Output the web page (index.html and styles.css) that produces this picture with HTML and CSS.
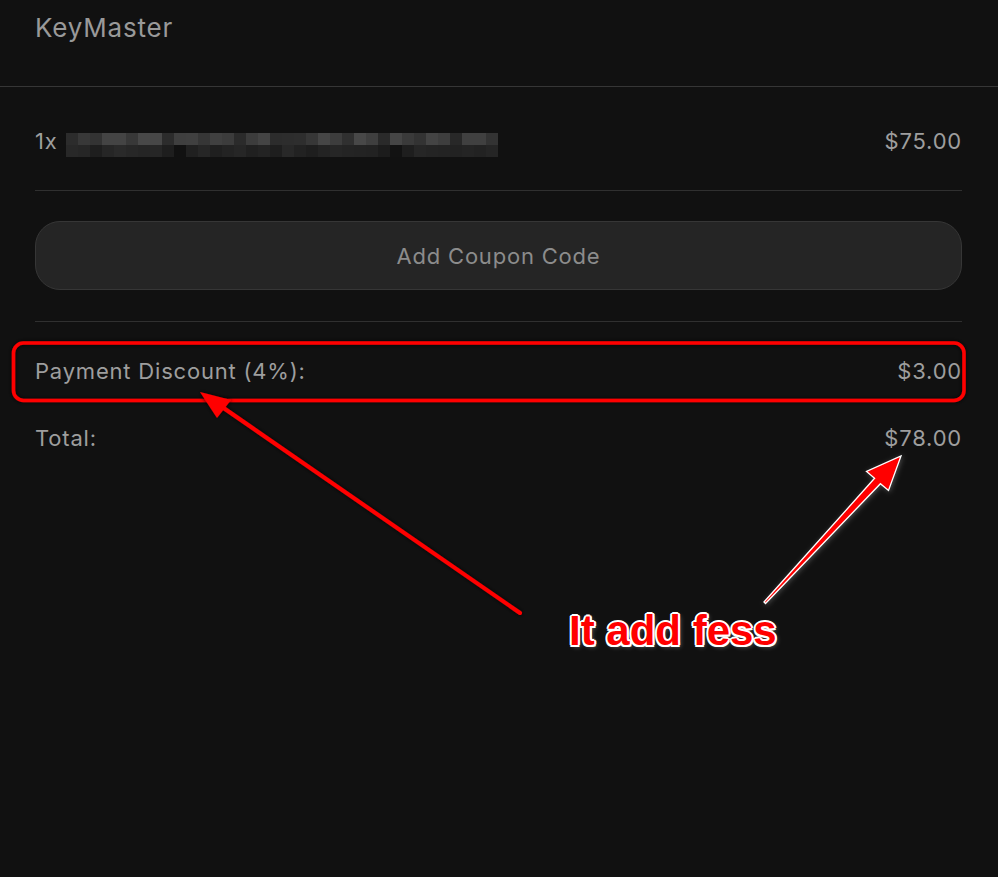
FILE: index.html
```html
<!DOCTYPE html>
<html lang="en">
<head>
  <meta charset="UTF-8" />
  <meta name="viewport" content="width=device-width, initial-scale=1.0" />
  <title>KeyMaster - Checkout</title>
  <link rel="stylesheet" href="styles.css">
  <script>
    // pixelated product name (censored in the screenshot)
    const topRow = [0x2c,0x38,0x33,0x44,0x44,0x38,0x48,0x47,0x2c,0x3f,0x40,0x36,0x40,0x3c,0x2b,0x3c,0x44,0x2c,
                    0x2d,0x2e,0x37,0x46,0x3d,0x30,0x48,0x3f,0x2a,0x45,0x3a,0x33,0x44,0x3e,0x28,0x40,0x40,0x33];
    const bottomRow = [0x28,0x26,0x1e,0x26,0x2a,0x27,0x25,0x26,0x1e,0x11,0x20,0x26,0x1f,0x23,0x26,0x20,0x23,0x1e,
                       0x28,0x22,0x1e,0x23,0x26,0x24,0x23,0x22,0x1c,0x12,0x1e,0x26,0x24,0x23,0x22,0x24,0x22,0x25];

    window.onload = function() {
      const blur = document.querySelector('.blur');
      [topRow, bottomRow].forEach(row => {
        row.forEach(v => {
          const cell = document.createElement('span');
          cell.style.background = `rgb(${v},${v},${v})`;
          blur.appendChild(cell);
        });
      });
    }
  </script>
</head>
<body>
  <header>
    <h1>KeyMaster</h1>
  </header>

  <div class="container">
    <div class="item">
      <div class="item-name">
        <span>1x</span>
        <div class="blur"></div>
      </div>
      <span>$75.00</span>
    </div>

    <button class="coupon">Add Coupon Code</button>

    <div class="totals">
      <div class="line">
        <span>Payment Discount (4%):</span>
        <span>$3.00</span>
      </div>
      <div class="line total">
        <span>Total:</span>
        <span>$78.00</span>
      </div>
    </div>
  </div>

  <svg class="markup" width="998" height="877" viewBox="0 0 998 877">
    <defs>
      <filter id="glow" x="-10%" y="-10%" width="120%" height="120%">
        <feDropShadow dx="0" dy="0" stdDeviation="2" flood-color="#000" flood-opacity="0.9" />
      </filter>
      <filter id="lift" x="-20%" y="-20%" width="140%" height="140%">
        <feDropShadow dx="1" dy="1" stdDeviation="2.5" flood-color="#fff" flood-opacity="0.25" />
      </filter>
    </defs>
    <rect x="13.5" y="343" width="950.5" height="57.5" rx="10" fill="none" stroke="#ff0000" stroke-width="3.5" filter="url(#glow)" />
    <g filter="url(#glow)">
      <line x1="520" y1="613" x2="212" y2="400" stroke="#ff0000" stroke-width="4" stroke-linecap="round" />
      <polygon points="200,392 231,400 217,418" fill="#ff0000" />
    </g>
    <polygon class="arrow-r" points="764,602 874.6,478.3 866.5,471.5 901,456 888.5,490.5 880.4,483.7 765.5,603.5"
             fill="#ff0000" stroke="#fff" stroke-width="1.3" stroke-linejoin="miter" filter="url(#lift)" />
  </svg>
  <div class="note">It add fess</div>
</body>
</html>
```

FILE: styles.css
```css
* {
  margin: 0;
  padding: 0;
  box-sizing: border-box;
  font-family: 'Inter', sans-serif;
}
body {
  background-color: #111111;
  color: #9e9e9e;
  width: 998px;
  min-height: 877px;
  position: relative;
  overflow: hidden;
}
header {
  height: 87px;
  padding: 12px 35px 0;
  border-bottom: 1px solid #363636;
}
header h1 {
  font-size: 26px;
  font-weight: 400;
  line-height: 32px;
  letter-spacing: 0.8px;
  color: #999;
}
.container {
  padding: 0 36px 0 35px;
}
.item {
  display: flex;
  justify-content: space-between;
  align-items: center;
  height: 104px;
  padding-top: 5px;
  font-size: 22px;
  letter-spacing: 0.8px;
  line-height: 26px;
  border-bottom: 1px solid #303030;
}
.item-name {
  display: flex;
  align-items: center;
  gap: 8px;
}
.blur {
  display: grid;
  grid-template-columns: repeat(36, 12px);
  grid-auto-rows: 12px;
  transform: translateY(4px);
}
.coupon {
  display: block;
  width: 100%;
  height: 69px;
  margin: 30px 0 31px;
  background: #252525;
  border: 1px solid #363636;
  border-radius: 25px;
  color: #8c8c8c;
  font-size: 22px;
  letter-spacing: 0.8px;
  cursor: pointer;
}
.totals {
  border-top: 1px solid #303030;
  padding-top: 36px;
}
.line {
  display: flex;
  justify-content: space-between;
  font-size: 22px;
  letter-spacing: 0.8px;
  line-height: 26px;
}
.line.total {
  margin-top: 41px;
}
.markup {
  position: absolute;
  top: 0;
  left: 0;
  pointer-events: none;
}
.note {
  position: absolute;
  left: 569px;
  top: 610px;
  font-family: 'Liberation Sans', Arial, sans-serif;
  font-weight: 700;
  font-size: 42px;
  line-height: 42px;
  color: #ff0000;
  text-shadow:
    2px 0 0 #fff, -2px 0 0 #fff, 0 2px 0 #fff, 0 -2px 0 #fff,
    1.5px 1.5px 0 #fff, -1.5px 1.5px 0 #fff, 1.5px -1.5px 0 #fff, -1.5px -1.5px 0 #fff,
    2px 2px 5px rgba(255, 255, 255, 0.35);
}
```
